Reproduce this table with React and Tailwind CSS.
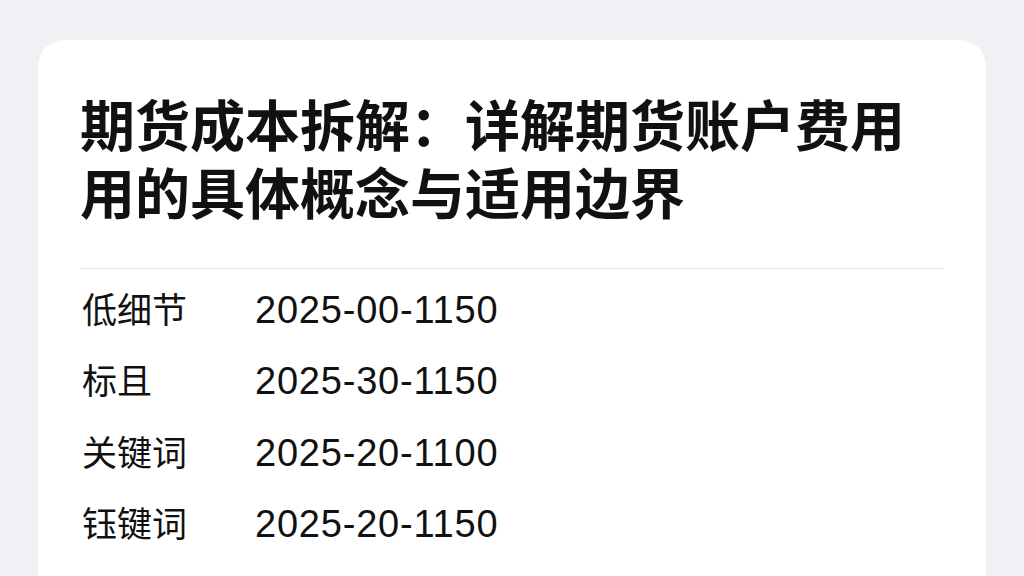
import React from "react";

const rows = [
  { label: "低细节", date: "2025-00-1150" },
  { label: "标且", date: "2025-30-1150" },
  { label: "关键词", date: "2025-20-1100" },
  { label: "钰键词", date: "2025-20-1150" },
];

const cjk = { fontFamily: '"Noto Sans CJK SC", "Noto Sans", sans-serif' };
const latin = { fontFamily: '"Liberation Sans", Arial, sans-serif' };

export default function App() {
  return (
    <div className="min-h-screen bg-[#eff1f4] px-[38px] pt-[40px] overflow-hidden h-[576px]">
      <div className="bg-white rounded-t-[26px] shadow-[0_1px_3px_rgba(0,0,0,0.03)] px-[42px] pt-[48px] pb-10 min-h-[560px]">
        <h1
          className="text-[55px] leading-[68px] font-bold text-[#111111]"
          style={cjk}
        >
          期货成本拆解：详解期货账户费用用的具体概念与适用边界
        </h1>

        <div className="mt-[44px] mb-[3px] h-px bg-[#e8e9ec]" />

        <div>
          {rows.map((row) => (
            <div key={row.label} className="flex items-center h-[71.5px] text-[#111111]">
              <span className="w-[175px] text-[35px] pl-[2px]" style={cjk}>
                {row.label}
              </span>
              <span className="text-[38px] tracking-[0.8px] pt-[5px]" style={latin}>
                {row.date}
              </span>
            </div>
          ))}
        </div>
      </div>
    </div>
  );
}
